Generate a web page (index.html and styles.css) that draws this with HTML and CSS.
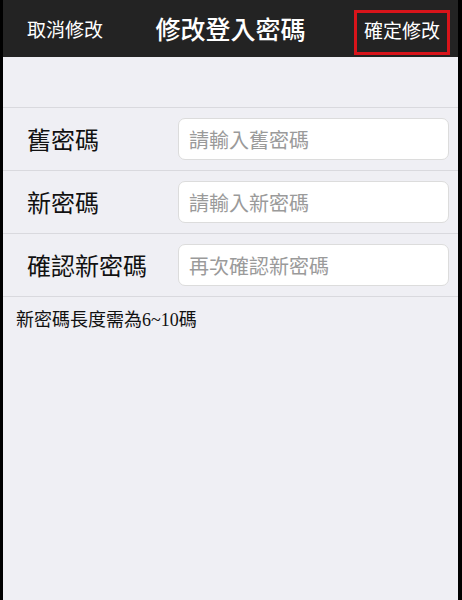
FILE: index.html
```html
<!DOCTYPE html>
<html lang="zh-Hant">
<head>
<meta charset="utf-8">
<title>修改登入密碼</title>
<link rel="stylesheet" href="styles.css">
</head>
<body>
<div class="app">
  <header class="topbar">
    <span class="nav-left">取消修改</span>
    <span class="nav-title">修改登入密碼</span>
    <span class="nav-right">確定修改</span>
  </header>
  <section class="form">
    <div class="row">
      <span class="label">舊密碼</span>
      <input class="field" type="password" placeholder="請輸入舊密碼">
    </div>
    <div class="row">
      <span class="label">新密碼</span>
      <input class="field" type="password" placeholder="請輸入新密碼">
    </div>
    <div class="row">
      <span class="label">確認新密碼</span>
      <input class="field" type="password" placeholder="再次確認新密碼">
    </div>
  </section>
  <p class="note">新密碼長度需為6~10碼</p>
</div>
</body>
</html>
```
FILE: styles.css
```css
html, body {
  margin: 0;
  padding: 0;
  background: #000;
}
body {
  font-family: "Noto Sans CJK TC", "Noto Sans CJK SC", sans-serif;
}
.app {
  margin: 0 4px 0 3px;
  min-height: 600px;
  background: #efeff4;
}
.topbar {
  height: 57px;
  background: #232323;
  color: #fff;
  display: grid;
  grid-template-columns: 1fr auto 1fr;
  align-items: center;
}
.nav-left {
  justify-self: start;
  padding-left: 24px;
  font-size: 19px;
  line-height: 1;
}
.nav-title {
  font-size: 25px;
  font-weight: 500;
  line-height: 1;
}
.nav-right {
  justify-self: end;
  margin-right: 8px;
  margin-top: 7px;
  height: 34px;
  display: flex;
  align-items: center;
  padding: 0 7px 5px 7px;
  border: 3px solid #d8141a;
  font-size: 19px;
  line-height: 1;
}
.form {
  margin-top: 50px;
  border-top: 1px solid #d9d9de;
}
.row {
  height: 62px;
  border-bottom: 1px solid #d9d9de;
  display: flex;
  align-items: center;
  padding: 0 9px 0 24px;
}
.label {
  width: 151px;
  flex: none;
  font-size: 24px;
  color: #111;
  line-height: 1;
}
.field {
  flex: 1;
  min-width: 0;
  height: 42px;
  box-sizing: border-box;
  border: 1px solid #dcdcdc;
  border-radius: 7px;
  background: #fff;
  padding: 0 10px;
  font-family: "Noto Sans CJK TC", sans-serif;
  font-size: 20px;
  outline: none;
}
.field::placeholder {
  color: #9a9a9a;
}
.note {
  margin: 0;
  padding: 13px 0 0 13px;
  font-family: "Liberation Serif", "Noto Sans CJK TC", serif;
  font-size: 18px;
  color: #111;
  line-height: 20px;
}
```
